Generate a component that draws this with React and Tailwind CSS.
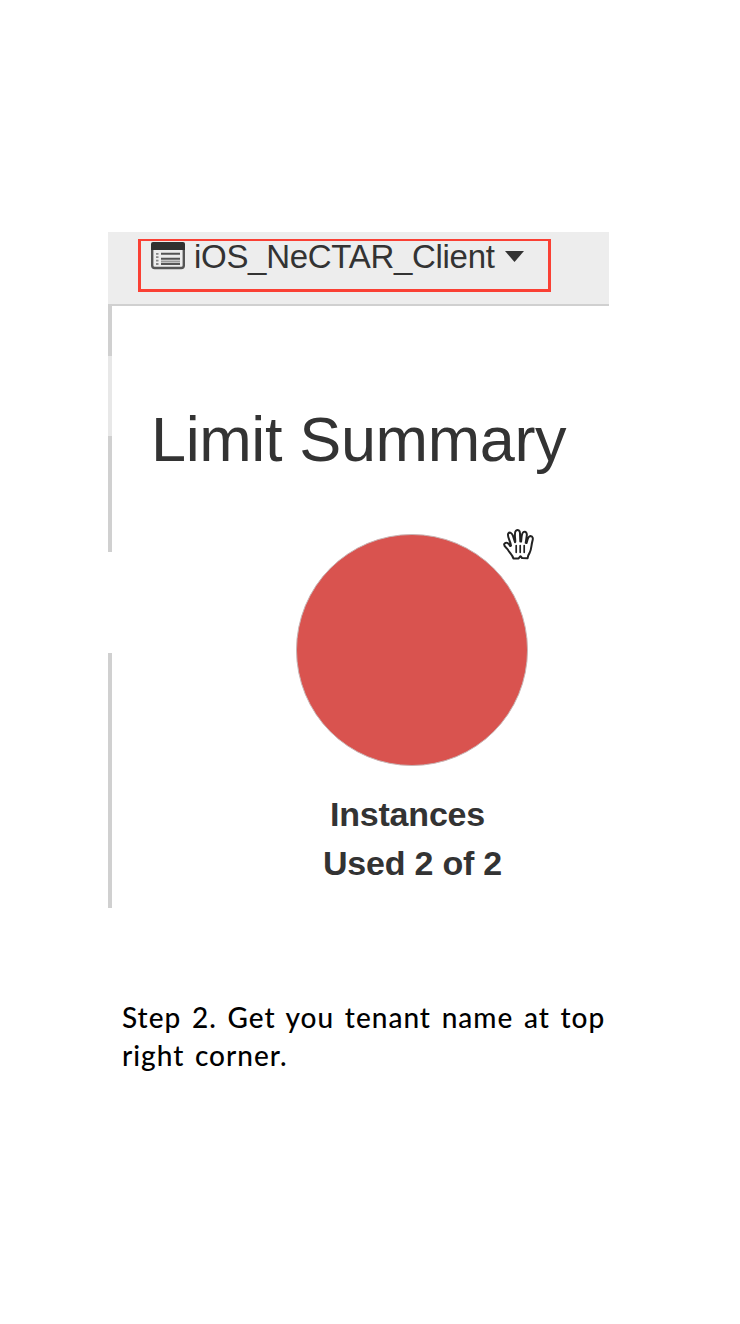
function ListIcon() {
  return (
    <svg className="block h-7 w-[34px] shrink-0" viewBox="0 0 34 28" fill="none">
      <rect x="1.2" y="2" width="31.6" height="24" rx="2.5" fill="#ededed" stroke="#555" strokeWidth="2.4" />
      <path d="M0 8V2a2 2 0 0 1 2-2h30a2 2 0 0 1 2 2v6Z" fill="#303030" />
      <path d="M5 11.8h2.5M5 15.2h2.5M5 18.6h2.5M5 22h2.5" stroke="#888" strokeWidth="1.8" />
      <path d="M10 11.8h19M10 16.8h19M10 22h19" stroke="#555" strokeWidth="1.9" />
      <path d="M10 19.5h19" stroke="#999" strokeWidth="2" />
    </svg>
  );
}

function HandCursor() {
  return (
    <svg className="absolute left-[393px] top-[294px] h-9 w-9" viewBox="0 0 36 36">
      <path
        d="M12.4 32.4C11.4 29 8.5 26.8 7.3 24.4C6.2 21.8 2.6 20.6 3.2 18C4.8 15.4 7.7 17.1 9.2 20L10 19.6C9.5 15 5.8 10.3 7.2 7.6C8.8 5.4 11.3 7.4 12 10L14 16.2L14.3 15.8C14.3 11.5 12.9 6.5 14.9 4.7C17 3.1 19 4.6 19 7.5L19.3 15.5L20.1 15.5C20.6 11.8 20.3 7 22.7 5.9C25.2 5.2 26.2 7.5 25.7 10.1L24.7 16.8L25.5 17C26.6 14.3 26.6 10.3 29.5 10.1C32 10.3 32.2 12.7 31.4 15.1C30.2 19.1 30.6 23.5 28.6 26.9C27.4 28.8 26.7 30 26.6 32.2L21 32L19.5 30.2L17.6 32.4Z"
        fill="white"
        stroke="#222"
        strokeWidth="2"
        strokeLinejoin="round"
      />
      <path d="M15.2 19.5v6.8M19.2 19.5v6.8M23.2 19.5v6.8" stroke="#222" strokeWidth="1.7" strokeLinecap="round" />
    </svg>
  );
}

function Rail() {
  return (
    <div className="flex w-1 shrink-0 flex-col">
      <div className="h-[50px] bg-[#d0d0d0]" />
      <div className="h-20 bg-[#e8e8e8]" />
      <div className="h-[116px] bg-[#d0d0d0]" />
      <div className="h-[101px]" />
      <div className="h-[255px] bg-[#d0d0d0]" />
    </div>
  );
}

export default function App() {
  return (
    <main className="min-h-[1324px] bg-white pl-[108px] pt-[232px] font-['Liberation_Sans',Arial,sans-serif] text-[#333]">
      <section className="relative w-[501px]">
        <header className="h-[74px] border-b-2 border-[#d0d0d0] bg-[#ededed]">
          <div className="flex pl-[43px] pt-[5px]">
            <div className="pt-[5px]">
              <ListIcon />
            </div>
            <span className="ml-[9px] whitespace-nowrap text-[33px] leading-[40px] tracking-[-0.3px]">iOS_NeCTAR_Client</span>
            <svg className="ml-[10px] mt-[14px] h-[11px] w-[19px]" viewBox="0 0 19 11">
              <path d="M0 0h19L9.5 11Z" fill="#333" />
            </svg>
          </div>
        </header>
        <div className="absolute left-[30px] top-[7px] h-[53px] w-[413px] border-[3px] border-t-2 border-[#fa4034]" />

        <div className="flex h-[602px]">
          <Rail />
          <div className="flex-1 pt-[97px]">
            <h1 className="whitespace-nowrap pl-[39px] text-[63px] leading-[72px] tracking-[-0.38px]">Limit Summary</h1>
            <div className="ml-[184px] mt-[59px] size-[232px] rounded-full border border-[#c8b5b5] bg-[#d9534f]" />
            <div className="ml-[200px] mt-6 w-[200px] text-center text-[34px] font-bold leading-[49px] tracking-[-0.2px]">
              <p className="pr-[9px]">Instances</p>
              <p className="pl-px">Used 2 of 2</p>
            </div>
          </div>
        </div>
        <HandCursor />
      </section>

      <p className="ml-[14px] mt-[90px] whitespace-nowrap font-['Lato',sans-serif] text-[28px] font-medium leading-[38px] tracking-[1px] text-black [word-spacing:2.6px]">
        Step 2. Get you tenant name at top
        <br />
        right corner.
      </p>
    </main>
  );
}
